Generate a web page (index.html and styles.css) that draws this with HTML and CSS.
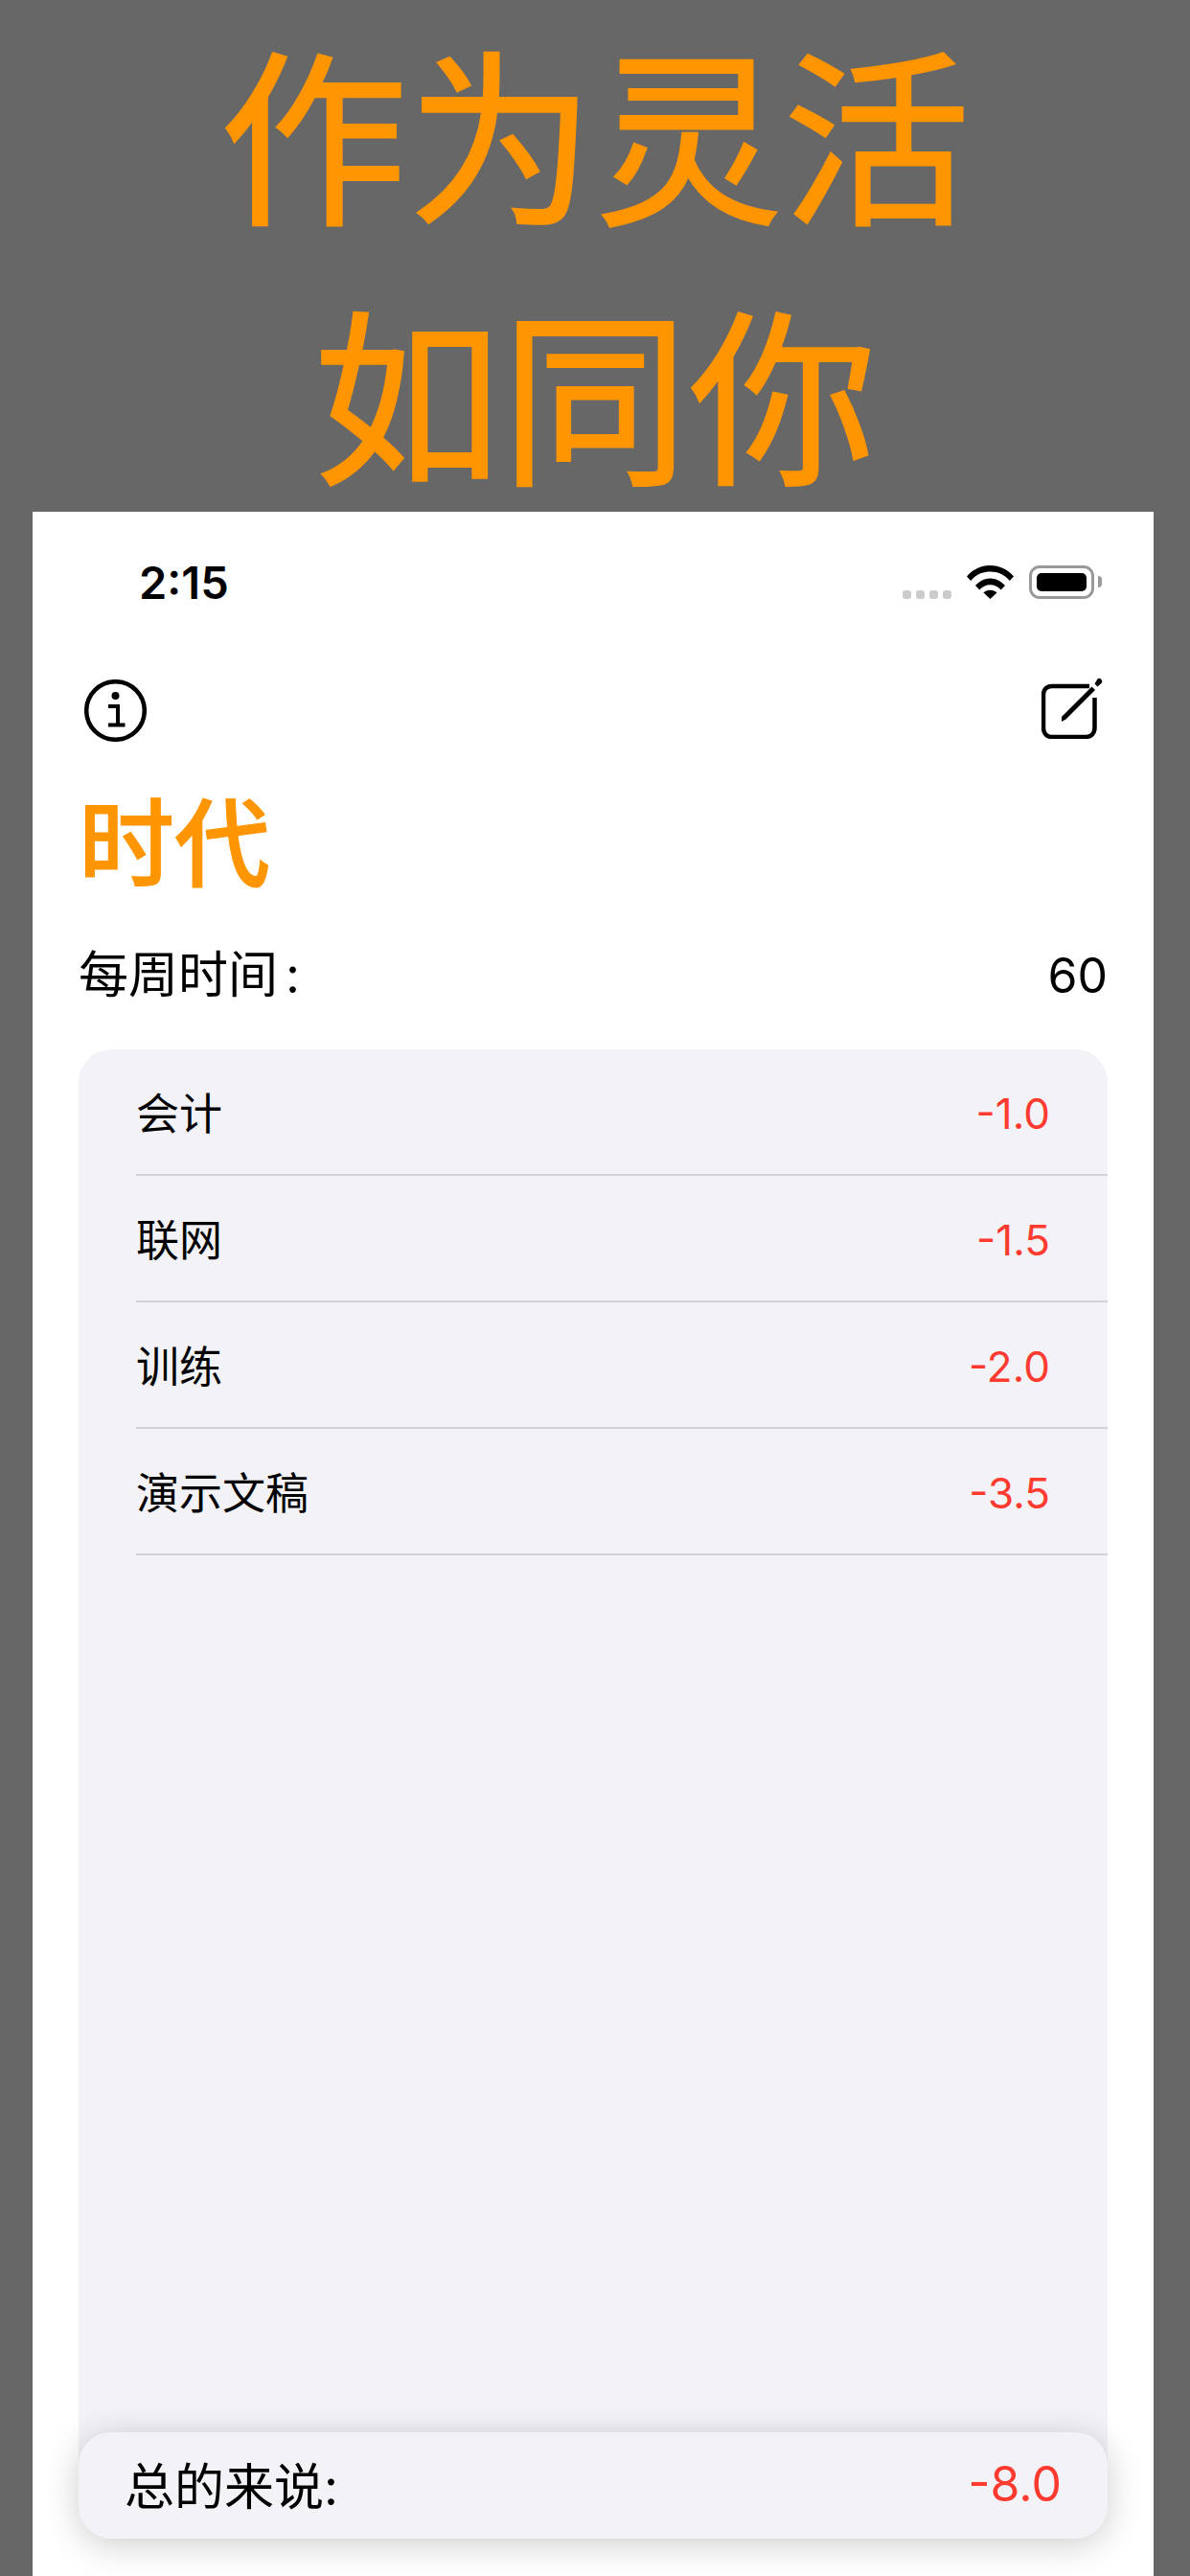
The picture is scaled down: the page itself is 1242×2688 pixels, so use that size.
FILE: index.html
```html
<!DOCTYPE html>
<html lang="zh-CN">
<head>
    <meta charset="UTF-8">
    <meta name="viewport" content="width=device-width, initial-scale=1.0">
    <title>时代</title>
    <link rel="stylesheet" href="styles.css">
</head>
<body>
    <header class="hero">
        <div>作为灵活</div>
        <div>如同你</div>
    </header>
    <main class="screen">
        <div class="status">
            <span class="time">2:15</span>
            <div class="status-icons">
                <div class="signal"><i></i><i></i><i></i><i></i></div>
                <svg class="wifi" width="49" height="36" viewBox="0 0 49 36">
                    <path d="M0 12.500C6.500 5 15 1 24.500 1S42.500 5 49 12.500L44.800 17C39.500 10.500 32.500 7.500 24.500 7.500S9.500 10.500 4.200 17Z"/>
                    <path d="M9 22C13 17.500 18.500 14.500 24.500 14.500S36 17.500 40 22L35.600 26.500C32.800 23.300 29 21.300 24.500 21.300S16.200 23.300 13.400 26.500Z"/>
                    <path d="M17.500 29.500C19.300 27.800 21.800 26.800 24.500 26.800S29.700 27.800 31.500 29.500L24.500 36Z"/>
                </svg>
                <div class="battery"><div class="battery-level"></div></div>
            </div>
        </div>
        <nav class="nav">
            <svg class="info" width="65" height="65" viewBox="0 0 65 65" fill="none" stroke="#000">
                <circle cx="32.500" cy="32.500" r="30.300" stroke-width="4.500"/>
                <circle cx="32.500" cy="17" r="4" fill="#000" stroke="none"/>
                <path d="M25 28H35V47.500M25 47.500H42.500" stroke-width="4"/>
            </svg>
            <svg class="compose" width="64" height="64" viewBox="0 0 64 64" fill="none" stroke="#000">
                <path d="M50 9H11C5.500 9 2 12.500 2 18V52C2 58.500 5.500 62 11 62H46C52 62 55.500 58.500 55.500 52V21" stroke-width="4.500"/>
                <path d="M21 41L52.500 9.500L56 13L25.500 43.500L21 46Z" fill="#000" stroke="none"/>
                <path d="M55.500 6.500L58.500 1.500Q60 0 62 1.500L63 3Q64 5 62.500 6L58.500 9.500Z" fill="#000" stroke="none"/>
            </svg>
        </nav>
        <h1 class="title">时代</h1>
        <div class="weekly">
            <span>每周时间<span class="colon">:</span></span>
            <span class="hours">60</span>
        </div>
        <section class="card">
            <div class="row"><span>会计</span><span class="value">-1.0</span></div>
            <div class="row"><span>联网</span><span class="value">-1.5</span></div>
            <div class="row"><span>训练</span><span class="value">-2.0</span></div>
            <div class="row"><span>演示文稿</span><span class="value">-3.5</span></div>
        </section>
        <div class="total">
            <span>总的来说:</span>
            <span class="value">-8.0</span>
        </div>
    </main>
</body>
</html>
```

FILE: styles.css
```css
* {
    box-sizing: border-box;
}
body {
    margin: 0;
    height: 2688px;
    overflow: hidden;
    background: #676767;
    font-family: Inter, "Noto Sans CJK SC", sans-serif;
    color: #000;
}
.hero {
    height: 534px;
    padding-top: 12px;
    text-align: center;
    font-size: 196px;
    line-height: 271px;
    color: #ff9500;
    -webkit-text-stroke: 2px #ff9500;
}
.screen {
    position: relative;
    height: 2154px;
    margin: 0 38px 0 34px;
    padding: 0 48px;
    background: #fff;
    display: flex;
    flex-direction: column;
}
.status {
    height: 146px;
    padding: 0 0 0 63px;
    display: flex;
    align-items: center;
    justify-content: space-between;
}
.time {
    font-size: 47px;
    font-weight: 600;
}
.status-icons {
    display: flex;
    align-items: flex-end;
    gap: 16px;
    padding-right: 14px;
}
.signal {
    display: flex;
    gap: 5px;
}
.signal i {
    width: 9px;
    height: 9px;
    border-radius: 3px;
    background: #ccc;
}
.battery {
    position: relative;
    width: 68px;
    height: 35px;
    padding: 5px;
    border: 3px solid #999;
    border-radius: 11px;
}
.battery::after {
    content: "";
    position: absolute;
    right: -11px;
    top: 8px;
    width: 4px;
    height: 12px;
    background: #999;
    border-radius: 0 4px 4px 0;
}
.battery-level {
    height: 100%;
    background: #000;
    border-radius: 5px;
}
.nav {
    height: 143px;
    padding: 0 5px 0 6px;
    display: flex;
    justify-content: space-between;
    align-items: flex-start;
}
.info {
    margin-top: 29px;
}
.compose {
    margin-top: 27px;
}
.title {
    margin: 0;
    height: 160px;
    font-size: 100px;
    line-height: 116px;
    font-weight: 500;
    color: #ff9500;
    -webkit-text-stroke: 1px #ff9500;
}
.weekly {
    height: 112px;
    display: flex;
    justify-content: space-between;
    font-size: 52px;
    line-height: 70px;
}
.hours {
    font-size: 50px;
}
.colon {
    margin-left: 8px;
}
.card {
    flex: 1;
    margin-bottom: 80px;
    background: #f2f2f7;
    border-radius: 34px 34px 0 0;
    padding-left: 60px;
}
.row {
    height: 132px;
    padding: 0 60px 2px 0;
    border-bottom: 2px solid #d1d1d6;
    display: flex;
    align-items: center;
    justify-content: space-between;
    font-size: 45px;
}
.value {
    margin-top: 6px;
    color: #ff3b30;
    font-size: 44px;
}
.total {
    position: absolute;
    left: 48px;
    right: 48px;
    top: 2004px;
    height: 111px;
    padding: 0 48px 5px;
    background: #f2f2f7;
    border-radius: 34px;
    box-shadow: 0 6px 36px rgba(0, 0, 0, 0.2);
    display: flex;
    align-items: center;
    justify-content: space-between;
    font-size: 52px;
}
.total .value {
    font-size: 50px;
    margin-top: 2px;
}
```
